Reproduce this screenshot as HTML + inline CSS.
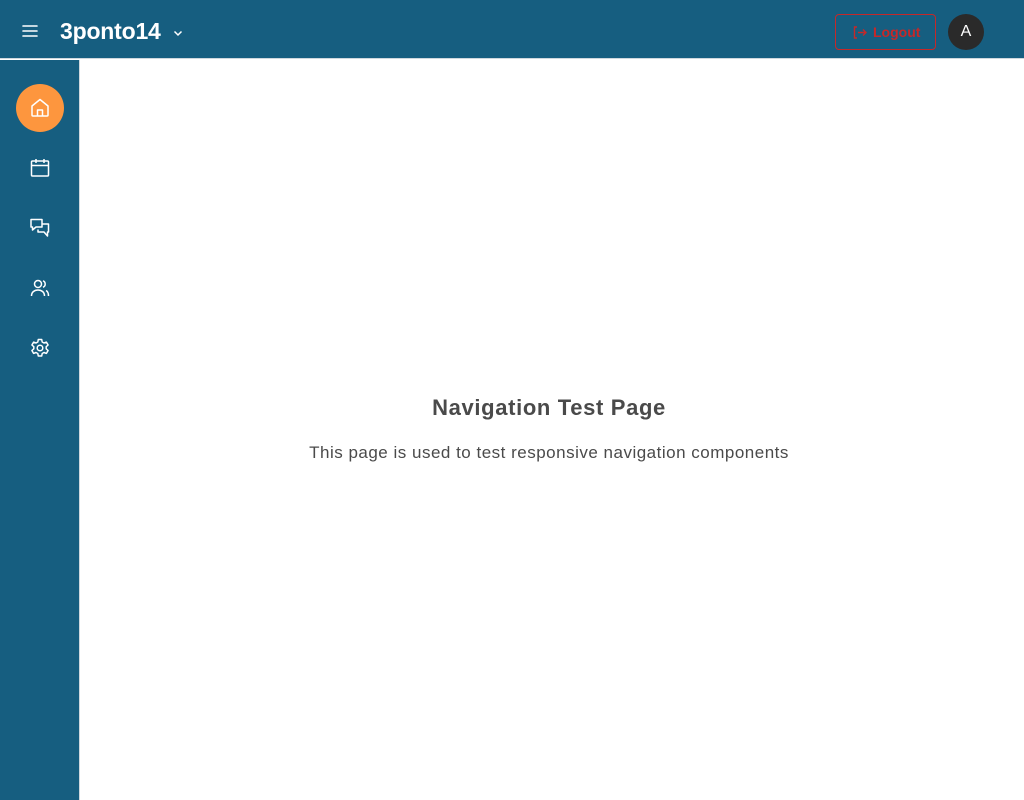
<!DOCTYPE html>
<html><head><meta charset="utf-8"><style>
*{margin:0;padding:0;box-sizing:border-box}
body{width:1024px;height:800px;overflow:hidden;background:#fff;font-family:"Liberation Sans",sans-serif;position:relative}
.hdr{position:absolute;left:0;top:0;width:1024px;height:59px;background:#165e80;border-bottom:1px solid #cfd8de}
.side{position:absolute;left:0;top:60px;width:80px;height:740px;background:#165e80;border-right:1px solid #cfd8de}
.ic{position:absolute;left:28px;width:24px;height:24px}
</style></head><body>
<div class="hdr">
<svg style="position:absolute;left:22px;top:24px" width="16" height="14" viewBox="0 0 16 14"><path d="M1 2h14M1 7h14M1 12h14" stroke="#fff" stroke-width="1.6" stroke-linecap="round"/></svg>
<div style="position:absolute;left:60px;top:18px;color:#fff;font-size:23px;font-weight:bold;letter-spacing:-0.2px">3ponto14</div>
<svg style="position:absolute;left:173px;top:29px" width="10" height="8" viewBox="0 0 10 8"><path d="M1.5 2.5l3.5 3.5 3.5-3.5" stroke="#fff" stroke-width="1.5" fill="none"/></svg>
<div style="position:absolute;left:835px;top:14px;width:101px;height:36px;border:1px solid #c62828;border-radius:4px;color:#c62828;font-size:14px;font-weight:bold;line-height:34px;padding-left:16px">
<svg style="position:absolute;left:17px;top:11px" width="14" height="13" viewBox="0 0 14 13"><path d="M4 1H1.5v11H4M5 6.5h8M10 3.5l3 3-3 3" stroke="#c62828" stroke-width="1.4" fill="none"/></svg>
<span style="position:absolute;left:37px;top:0">Logout</span></div>
<div style="position:absolute;left:948px;top:14px;width:36px;height:36px;border-radius:50%;background:#2a2a2a;color:#fff;font-size:16px;text-align:center;line-height:36px">A</div>
</div>
<div class="side">
<div style="position:absolute;left:16px;top:24px;width:48px;height:48px;border-radius:50%;background:#fd963e"></div>
<svg class="ic" style="top:36px" viewBox="0 0 24 24" fill="none" stroke="#fff" stroke-width="1.5" stroke-linejoin="round"><path d="M4 10l8-6.5 8 6.5v9a1 1 0 0 1-1 1H5a1 1 0 0 1-1-1z"/><path d="M9.5 20v-6h5v6"/></svg>
<svg class="ic" style="top:96px" viewBox="0 0 24 24" fill="none" stroke="#fff" stroke-width="1.5"><rect x="3.5" y="5" width="17" height="15" rx="1"/><path d="M3.5 9.5h17M8 3v4M16 3v4"/></svg>
<svg class="ic" style="top:156px" viewBox="0 0 24 24" fill="none" stroke="#fff" stroke-width="1.5" stroke-linejoin="round"><path d="M3 3.5h11v7.5H8l-3.5 3v-3H3z"/><path d="M14 8h6.5v8h-1v4l-3.5-4H10v-2.5"/></svg>
<svg class="ic" style="top:216px" viewBox="0 0 24 24" fill="none" stroke="#fff" stroke-width="1.5"><circle cx="10" cy="8" r="3.5"/><path d="M3.5 20c0-4 3-6 6.5-6s6.5 2 6.5 6"/><path d="M15 4.8a3.5 3.5 0 0 1 0 6.5M18 14.5c1.6.8 2.5 2.8 2.5 5.5"/></svg>
<svg class="ic" style="top:276px" viewBox="0 0 24 24" fill="none" stroke="#fff" stroke-width="1.5" stroke-linejoin="round"><path d="M10.3 3.5h3.4l.5 2.5 1.8 1 2.4-.9 1.7 2.9-1.9 1.7v2.1l1.9 1.7-1.7 2.9-2.4-.9-1.8 1-.5 2.5h-3.4l-.5-2.5-1.8-1-2.4.9-1.7-2.9 1.9-1.7v-2.1L3.9 9l1.7-2.9 2.4.9 1.8-1z"/><circle cx="12" cy="12" r="2.8"/></svg>
</div>
<div style="position:absolute;left:80px;top:395px;width:938px;text-align:center;color:#4a4a4a;font-size:22px;font-weight:bold;letter-spacing:0.65px">Navigation Test Page</div>
<div style="position:absolute;left:80px;top:443px;width:938px;text-align:center;color:#4a4a4a;font-size:17px;letter-spacing:0.5px">This page is used to test responsive navigation components</div>
</body></html>
